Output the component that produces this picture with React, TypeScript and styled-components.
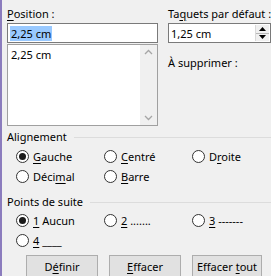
import React from 'react';
import styled, { createGlobalStyle } from 'styled-components';

const GlobalStyle = createGlobalStyle`
  html, body {
    margin: 0;
    padding: 0;
    background: #f0f0f0;
  }
  body {
    font-family: 'Noto Sans', 'Liberation Sans', sans-serif;
    font-size: 11px;
    color: #000;
  }
  u {
    text-decoration-thickness: 1px;
    text-underline-offset: 2px;
  }
`;

const Dialog = styled.div`
  box-sizing: border-box;
  width: 271px;
  height: 276px;
  overflow: hidden;
  border-left: 2px solid #8b7cbd;
  padding: 6px 0 0 5px;
`;

const TopRow = styled.div`
  display: grid;
  grid-template-columns: 151px 103px;
  column-gap: 10px;
`;

const Column = styled.div`
  display: flex;
  flex-direction: column;
`;

const FieldLabel = styled.div<{ $gap?: number }>`
  line-height: 15px;
  height: 15px;
  margin-top: ${(p) => p.$gap ?? 0}px;
  margin-bottom: 2px;
  white-space: nowrap;
`;

const TextBox = styled.div`
  box-sizing: border-box;
  height: 20px;
  border: 1px solid #7a7a7a;
  background: #fff;
  display: flex;
  align-items: center;
  padding-left: 2px;
`;

const Selected = styled.span`
  background: #99c9ff;
  line-height: 15px;
  padding: 0 1px;
`;

const ListBox = styled.div`
  box-sizing: border-box;
  height: 82px;
  margin-top: 1px;
  border: 1px solid #a0a0a0;
  background: #fff;
  display: flex;
`;

const ListItems = styled.div`
  flex: 1;
  padding: 2px 3px;
  line-height: 15px;
`;

const ScrollBar = styled.div`
  width: 17px;
  background: #f0f0f0;
  display: flex;
  flex-direction: column;
  justify-content: space-between;
  align-items: center;
  padding: 4px 0;
`;

const SpinBox = styled(TextBox)`
  justify-content: space-between;
  padding-right: 1px;
`;

const SpinButtons = styled.div`
  width: 13px;
  height: 16px;
  display: flex;
  flex-direction: column;
  border-left: 1px solid #d9d9d9;
  background: #f0f0f0;
`;

const SpinHalf = styled.div<{ $top?: boolean }>`
  flex: 1;
  display: flex;
  align-items: center;
  justify-content: center;
  border-bottom: ${(p) => (p.$top ? '1px solid #b8b8b8' : 'none')};
`;

const GroupHeader = styled.div<{ $gap: number }>`
  display: flex;
  align-items: center;
  height: 15px;
  line-height: 15px;
  margin-top: ${(p) => p.$gap}px;
`;

const GroupRule = styled.div`
  flex: 1;
  height: 1px;
  background: #dcdcdc;
  margin-left: 7px;
  margin-top: 2px;
`;

const RadioGrid = styled.div<{ $gap: number }>`
  display: grid;
  grid-template-columns: 88px 88px 80px;
  grid-auto-rows: 20px;
  padding-left: 9px;
  margin-top: ${(p) => p.$gap}px;
`;

const RadioItem = styled.label`
  display: flex;
  align-items: center;
  white-space: pre;
`;

const RadioCircle = styled.span<{ $checked?: boolean }>`
  box-sizing: border-box;
  width: 13px;
  height: 13px;
  border-radius: 50%;
  border: 1px solid #333;
  background: #fff;
  margin-right: 4px;
  display: flex;
  align-items: center;
  justify-content: center;
  &::after {
    content: '';
    width: 7px;
    height: 7px;
    border-radius: 50%;
    background: ${(p) => (p.$checked ? '#1a1a1a' : 'transparent')};
  }
`;

const ButtonRow = styled.div`
  display: flex;
  gap: 11px;
  margin: 5px 0 0 19px;
`;

const Button = styled.button<{ $width: number }>`
  box-sizing: border-box;
  width: ${(p) => p.$width}px;
  height: 22px;
  border: 1px solid #adadad;
  background: #e1e1e1;
  font-family: inherit;
  font-size: 11px;
  color: #000;
  padding: 0;
`;

function Chevron({ up }: { up?: boolean }) {
  return (
    <svg width="9" height="6" viewBox="0 0 9 6">
      <path
        d={up ? 'M1 5 L4.5 1.5 L8 5' : 'M1 1 L4.5 4.5 L8 1'}
        fill="none"
        stroke="#a6a6a6"
        strokeWidth="1.3"
      />
    </svg>
  );
}

function Triangle({ up }: { up?: boolean }) {
  return (
    <svg width="7" height="4" viewBox="0 0 7 4">
      <path d={up ? 'M0 4 L3.5 0 L7 4 Z' : 'M0 0 L3.5 4 L7 0 Z'} fill="#000" />
    </svg>
  );
}

type Option = { key: React.ReactNode; checked?: boolean };

function RadioGroup({
  title,
  gap,
  rowGap,
  options
}: {
  title: string;
  gap: number;
  rowGap: number;
  options: Option[];
}) {
  return (
    <>
      <GroupHeader $gap={gap}>
        {title}
        <GroupRule />
      </GroupHeader>
      <RadioGrid $gap={rowGap}>
        {options.map((o, i) => (
          <RadioItem key={`radio-${title}-${i}`}>
            <RadioCircle $checked={o.checked} />
            <span>{o.key}</span>
          </RadioItem>
        ))}
      </RadioGrid>
    </>
  );
}

export default function App() {
  return (
    <>
      <GlobalStyle />
      <Dialog>
        <TopRow>
          <Column>
            <FieldLabel>
              <u>P</u>osition :
            </FieldLabel>
            <TextBox>
              <Selected>2,25 cm</Selected>
            </TextBox>
            <ListBox>
              <ListItems>2,25 cm</ListItems>
              <ScrollBar>
                <Chevron up />
                <Chevron />
              </ScrollBar>
            </ListBox>
          </Column>
          <Column>
            <FieldLabel>
              Ta<u>q</u>uets par défaut :
            </FieldLabel>
            <SpinBox>
              <span>1,25 cm</span>
              <SpinButtons>
                <SpinHalf $top>
                  <Triangle up />
                </SpinHalf>
                <SpinHalf>
                  <Triangle />
                </SpinHalf>
              </SpinButtons>
            </SpinBox>
            <FieldLabel $gap={12}>À supprimer :</FieldLabel>
          </Column>
        </TopRow>

        <RadioGroup
          title="Alignement"
          gap={3}
          rowGap={2}
          options={[
            { key: <><u>G</u>auche</>, checked: true },
            { key: <><u>C</u>entré</> },
            { key: <>D<u>r</u>oite</> },
            { key: <>Déci<u>m</u>al</> },
            { key: <><u>B</u>arre</> }
          ]}
        />

        <RadioGroup
          title="Points de suite"
          gap={8}
          rowGap={1}
          options={[
            { key: <><u>1</u>{' Aucun'}</>, checked: true },
            { key: <><u>2</u>{' .......'}</> },
            { key: <><u>3</u>{' -------'}</> },
            { key: <><u>4</u>{' ____'}</> }
          ]}
        />

        <ButtonRow>
          <Button $width={72}>
            D<u>é</u>finir
          </Button>
          <Button $width={72}>
            <u>E</u>ffacer
          </Button>
          <Button $width={70}>
            Effacer <u>t</u>out
          </Button>
        </ButtonRow>
      </Dialog>
    </>
  );
}
